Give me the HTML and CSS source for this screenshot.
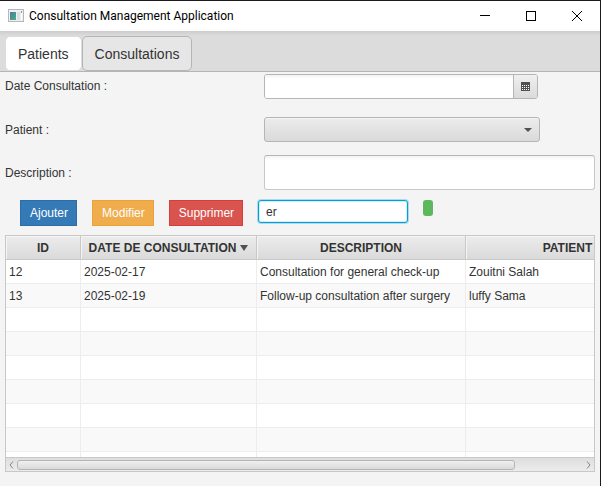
FILE: index.html
```html
<!DOCTYPE html>
<html lang="fr">
<head>
<meta charset="utf-8">
<title>Consultation Management Application</title>
<link rel="stylesheet" href="styles.css">
</head>
<body>
<div class="window">
  <header class="titlebar">
    <svg class="app-icon" width="16" height="14" viewBox="0 0 16 14" aria-hidden="true">
      <defs>
        <linearGradient id="pane" x1="0" y1="0" x2="1" y2="1">
          <stop offset="0" stop-color="#4a78a8"/>
          <stop offset="1" stop-color="#4fae7c"/>
        </linearGradient>
      </defs>
      <rect x="0.5" y="0.5" width="15" height="12" fill="#eef0f2" stroke="#b4b8bc"/>
      <rect x="2" y="3" width="6" height="8" fill="url(#pane)"/>
      <rect x="9" y="3" width="3" height="8" fill="#dcdee0"/>
      <rect x="13" y="2" width="1" height="2" fill="#5fae8a"/>
      <rect x="13" y="4" width="1" height="7" fill="#fff"/>
    </svg>
    <h1 class="title">Consultation Management Application</h1>
    <div class="window-controls">
      <button class="window-button" type="button" aria-label="Minimize">
        <svg width="10" height="10" viewBox="0 0 10 10"><path d="M0 4.5H10" stroke="#000"/></svg>
      </button>
      <button class="window-button" type="button" aria-label="Maximize">
        <svg width="10" height="10" viewBox="0 0 10 10"><rect x="0.5" y="0.5" width="9" height="9" fill="none" stroke="#000"/></svg>
      </button>
      <button class="window-button" type="button" aria-label="Close">
        <svg width="10" height="10" viewBox="0 0 10 10"><path d="M0 0L10 10M10 0L0 10" stroke="#000"/></svg>
      </button>
    </div>
  </header>

  <nav class="tabs">
    <button class="tab tab-selected" type="button">Patients</button>
    <button class="tab" type="button">Consultations</button>
  </nav>

  <main class="content">
    <form class="form">
      <label class="date-label" for="date">Date Consultation :</label>
      <div class="date-picker">
        <input class="date-input" id="date" type="text">
        <button class="date-button" type="button" aria-label="Calendar">
          <svg width="9" height="9" viewBox="0 0 9 9">
            <path d="M0 0H9V9H0Z" fill="#505050"/>
            <path d="M1 3.5H8M1 5.5H8M1 7.5H8" stroke="#fff" stroke-dasharray="1 1"/>
          </svg>
        </button>
      </div>

      <label for="patient">Patient :</label>
      <div class="combo">
        <select class="combo-select" id="patient"><option></option></select>
        <svg class="combo-arrow" width="8" height="4" viewBox="0 0 8 4" aria-hidden="true"><path d="M0 0H8L4 4Z" fill="#505050"/></svg>
      </div>

      <label for="description">Description :</label>
      <input class="description" id="description" type="text">
    </form>

    <div class="actions">
      <button class="action action-add" type="button">Ajouter</button>
      <button class="action action-edit" type="button">Modifier</button>
      <button class="action action-delete" type="button">Supprimer</button>
      <input class="search" type="text" value="er" aria-label="Rechercher">
      <button class="search-button" type="button" aria-label="Lancer la recherche"></button>
    </div>

    <section class="table-view">
      <div class="viewport">
        <table class="table">
          <colgroup><col class="col-id"><col class="col-date"><col class="col-description"><col class="col-patient"></colgroup>
          <thead>
            <tr>
              <th>ID</th>
              <th><span class="sorted">DATE DE CONSULTATION<svg width="8" height="6" viewBox="0 0 8 6" aria-hidden="true"><path d="M0 0H8L4 6Z" fill="#505050"/></svg></span></th>
              <th>DESCRIPTION</th>
              <th>PATIENT</th>
            </tr>
          </thead>
          <tbody>
            <tr><td>12</td><td>2025-02-17</td><td>Consultation for general check-up</td><td>Zouitni Salah</td></tr>
            <tr><td>13</td><td>2025-02-19</td><td>Follow-up consultation after surgery</td><td>luffy Sama</td></tr>
            <tr><td></td><td></td><td></td><td></td></tr>
            <tr><td></td><td></td><td></td><td></td></tr>
            <tr><td></td><td></td><td></td><td></td></tr>
            <tr><td></td><td></td><td></td><td></td></tr>
            <tr><td></td><td></td><td></td><td></td></tr>
            <tr><td></td><td></td><td></td><td></td></tr>
            <tr><td></td><td></td><td></td><td></td></tr>
          </tbody>
        </table>
      </div>
      <div class="scrollbar">
        <button class="scroll-arrow" type="button" aria-label="Scroll left">
          <svg width="5" height="8" viewBox="0 0 5 8"><path d="M4 0.5L1 4L4 7.5" fill="none" stroke="#858585"/></svg>
        </button>
        <div class="track"><div class="thumb"></div></div>
        <button class="scroll-arrow" type="button" aria-label="Scroll right">
          <svg width="5" height="8" viewBox="0 0 5 8"><path d="M1 0.5L4 4L1 7.5" fill="none" stroke="#858585"/></svg>
        </button>
      </div>
    </section>
  </main>
</div>
</body>
</html>
```
FILE: styles.css
```css
* {
  box-sizing: border-box;
}

body {
  margin: 0;
  background: #f4f4f4;
  color: #333;
  font: 12px/16px "Liberation Sans", Arial, sans-serif;
}

button,
input,
select {
  margin: 0;
  padding: 0;
  border: 0;
  outline: 0;
  color: inherit;
  font: inherit;
}

svg {
  display: block;
}

.window {
  display: flex;
  flex-direction: column;
  height: 100vh;
  border-top: 1px solid #1c1a1e;
  border-right: 1px solid #1c1a1e;
}

.titlebar {
  display: flex;
  align-items: center;
  height: 30px;
  padding-left: 8px;
  background: #fff;
  color: #000;
}

.title {
  flex: 1;
  margin: 0 0 0 5px;
  font: 12px/16px Roboto, "Open Sans", sans-serif;
}

.window-controls {
  display: flex;
}

.window-button {
  display: flex;
  align-items: center;
  justify-content: center;
  width: 46px;
  height: 30px;
  background: none;
}

.tabs {
  display: flex;
  align-items: flex-end;
  height: 41px;
  padding-left: 5px;
  border-bottom: 1px solid #b5b5b5;
  background: linear-gradient(#cdcdcd, #dcdcdc 5px);
}

.tab {
  height: 35px;
  padding: 0 12px;
  border: 1px solid #b5b5b5;
  border-radius: 5px;
  background: #e6e6e6;
  font-size: 14px;
}

.tab-selected {
  border-color: #dcdcdc;
  background: #fff;
}

.content {
  display: flex;
  flex: 1;
  flex-direction: column;
  min-height: 0;
  padding: 2px 5px 14px;
}

.form {
  display: grid;
  grid-template-columns: 259px 1fr;
  grid-template-rows: 30px 35px 35px;
  row-gap: 8px;
  align-items: center;
}

.date-label {
  align-self: start;
  line-height: 25px;
}

.date-picker {
  display: flex;
  align-self: start;
  width: 274px;
  height: 25px;
  border: 1px solid #b5b5b5;
  border-radius: 3px;
  background: #fff;
  overflow: hidden;
}

.date-input {
  flex: 1;
  min-width: 0;
  padding: 0 7px;
  background: linear-gradient(#f2f2f2, #fff 4px);
}

.date-button {
  display: flex;
  align-items: center;
  justify-content: center;
  width: 24px;
  border-left: 1px solid #b5b5b5;
  background: linear-gradient(#f0f0f0, #dadada);
}

.combo {
  position: relative;
  width: 276px;
}

.combo-select {
  display: block;
  width: 100%;
  height: 25px;
  padding: 0 7px;
  border: 1px solid #b5b5b5;
  border-radius: 3px;
  background: linear-gradient(#ececec, #dadada);
  box-shadow: inset 0 1px #f5f5f5;
  appearance: none;
}

.combo-arrow {
  position: absolute;
  top: 11px;
  right: 8px;
  pointer-events: none;
}

.description {
  width: 100%;
  height: 35px;
  padding: 0 7px;
  border: 1px solid #c8c8c8;
  border-top-color: #b5b5b5;
  border-radius: 3px;
  background: linear-gradient(#f2f2f2, #fff 4px);
}

.actions {
  display: flex;
  align-items: flex-start;
  gap: 15px;
  padding: 10px 15px 9px;
}

.action {
  height: 26px;
  padding: 0 8px 0 9px;
  border: 1px solid;
  color: #fff;
}

.action-add {
  border-color: #2e6da4;
  background: #337ab7;
}

.action-edit {
  border-color: #eea236;
  background: #f0ad4e;
}

.action-delete {
  border-color: #d43f3a;
  background: #d9534f;
}

.search {
  width: 150px;
  height: 23px;
  padding: 0 7px;
  border: 1px solid #039ed3;
  border-radius: 3px;
  background: #fff;
  box-shadow: 0 0 0 1px #a8dcee, inset 0 0 0 1px #d5eef7;
}

.search-button {
  width: 10px;
  height: 16px;
  border-radius: 3px;
  background: #5cb85c;
}

.table-view {
  display: flex;
  flex: 1;
  flex-direction: column;
  min-height: 0;
  border: 1px solid #c8c8c8;
  background: #fff;
}

.viewport {
  flex: 1;
  min-height: 0;
  overflow: hidden;
}

.table {
  width: 664px;
  border-collapse: separate;
  border-spacing: 0;
  table-layout: fixed;
}

.col-id {
  width: 75px;
}

.col-date {
  width: 176px;
}

.col-description {
  width: 209px;
}

.col-patient {
  width: 204px;
}

.table th,
.table td {
  height: 24px;
  border-right: 1px solid #ededed;
  border-bottom: 1px solid #ededed;
  white-space: nowrap;
}

.table th {
  padding: 0;
  border-color: #c8c8c8;
  background: linear-gradient(#ececec, #dadada);
  box-shadow: inset 1px 1px #f5f5f5;
  text-align: center;
}

.table td {
  padding: 0 3px;
}

.table tbody tr:nth-child(even) {
  background: #f9f9f9;
}

.sorted {
  display: flex;
  align-items: center;
  justify-content: center;
  gap: 4px;
}

.scrollbar {
  display: flex;
  align-items: center;
  height: 14px;
  border-top: 1px solid #c8c8c8;
  background: linear-gradient(#dedede, #ececec);
}

.scroll-arrow {
  display: flex;
  align-items: center;
  justify-content: center;
  width: 11px;
  background: none;
}

.track {
  flex: 1;
}

.thumb {
  width: 88%;
  height: 10px;
  border: 1px solid #b5b5b5;
  border-radius: 3px;
  background: linear-gradient(#f0f0f0, #dadada);
}
```
